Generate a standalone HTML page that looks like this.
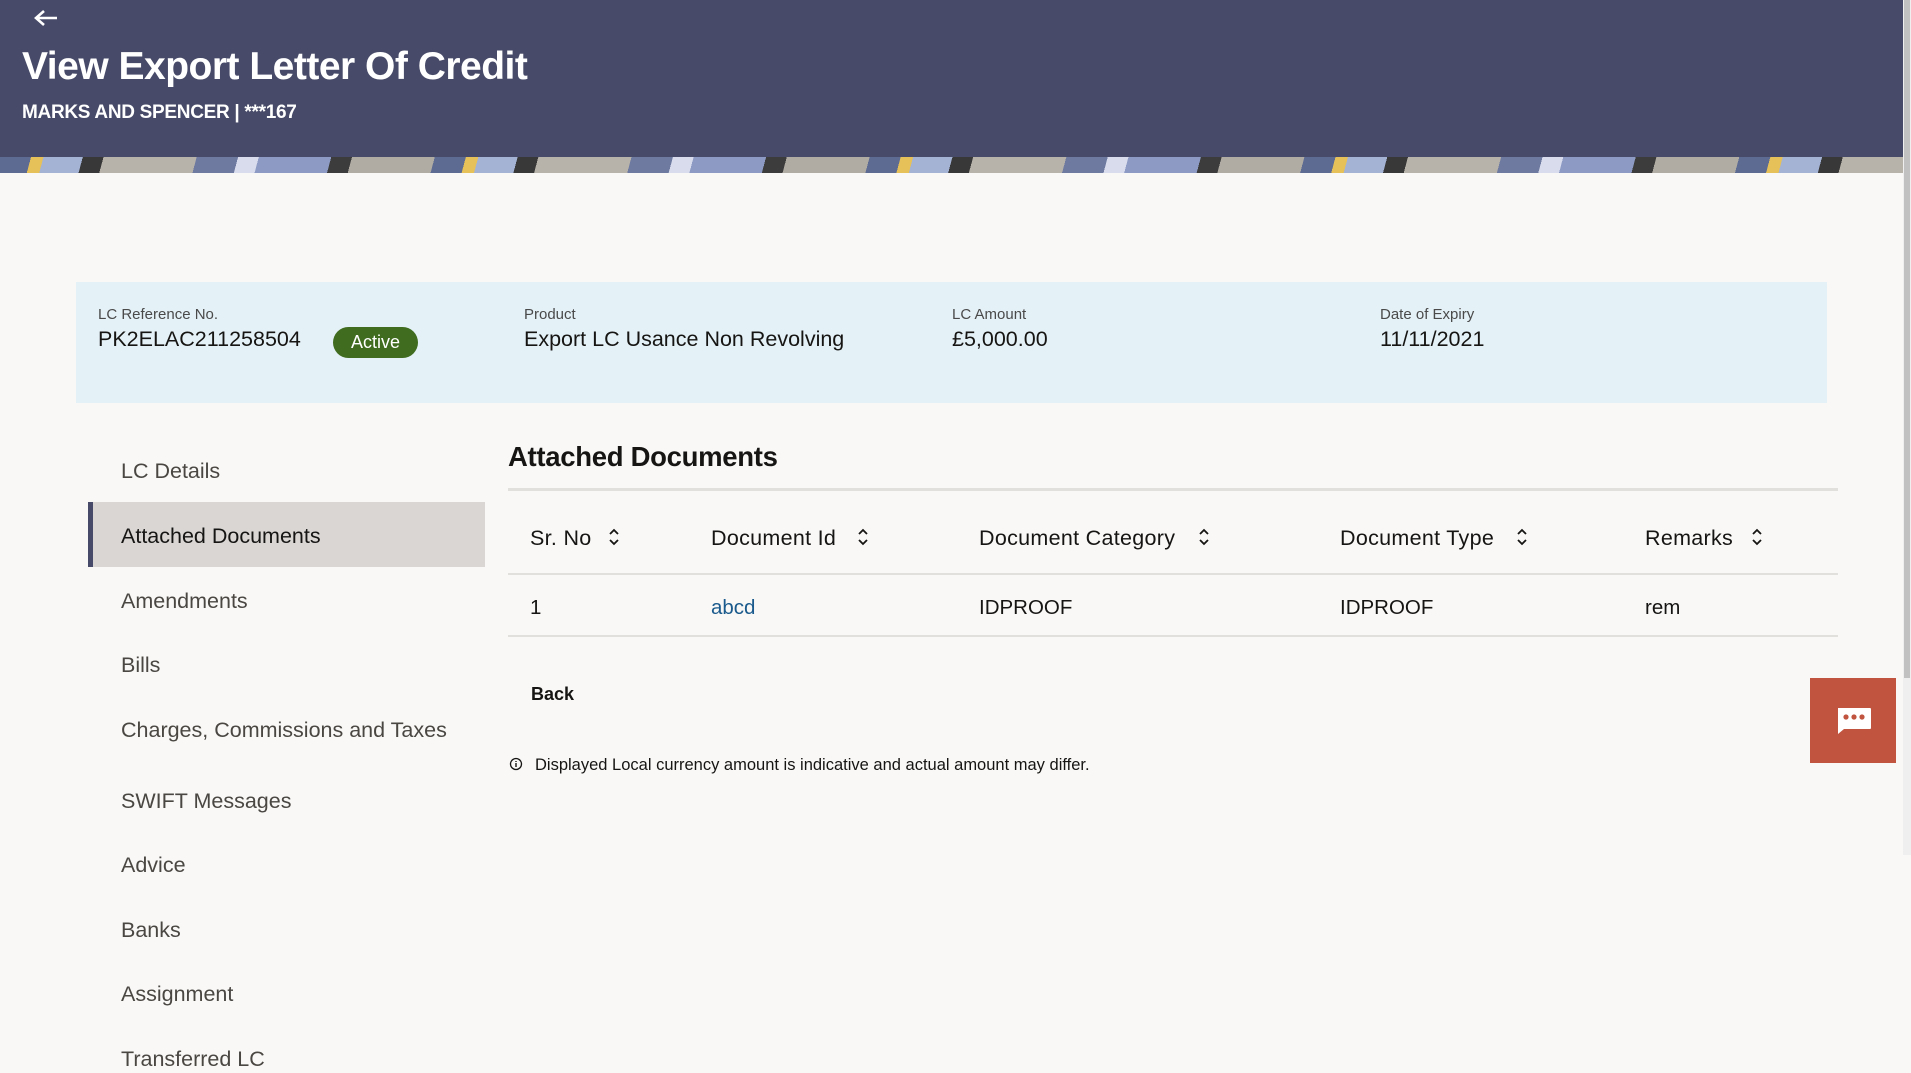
<!DOCTYPE html>
<html><head><meta charset="utf-8">
<style>
*{margin:0;padding:0;box-sizing:border-box}
body{width:1911px;height:1073px;overflow:hidden;background:#f9f8f6;font-family:"Liberation Sans",sans-serif;color:#161513;position:relative}
.a{position:absolute;white-space:nowrap}
.hdr{position:absolute;left:0;top:0;width:1903px;height:157px;background:#474a68}
.band{position:absolute;left:0;top:157px;width:1903px;height:16px;
background:repeating-linear-gradient(105deg,#5d6a92 0 30px,#e6c15a 30px 42px,#a4b2d4 42px 80px,#383838 80px 100px,#b7b2aa 100px 190px,#6e7aa0 190px 230px,#d8dcec 230px 250px,#8d9bc4 250px 320px,#3c3c3c 320px 340px,#b0aca4 340px 420px)}
.sb{position:absolute;left:1903px;top:0;width:8px;height:855px;background:#efefef}
.sbt{position:absolute;left:1904px;top:0;width:6px;height:678px;background:#c1c1c1}
.info{position:absolute;left:76px;top:282px;width:1751px;height:121px;background:#e4f1f7}
.lbl{font-size:15px;color:#4a4a4a}
.val{font-size:21.5px;color:#161513}
.nav{font-size:21.5px;color:#4a4743}
.th{font-size:21.5px;color:#161513;letter-spacing:0.3px}
.td{font-size:20.5px}
.line{position:absolute;height:2px;background:#e2e0dd}
</style></head><body>
<div class="hdr"></div>
<div class="band"></div>
<div class="sb"></div><div class="sbt"></div>
<svg class="a" style="left:33px;top:9px" width="26" height="18" viewBox="0 0 26 18"><path d="M24 9H4M11 2L3 9l8 7" stroke="#fff" stroke-width="2.6" fill="none"/></svg>
<div class="a" style="left:22px;top:45px;font-size:39px;font-weight:bold;color:#fff;letter-spacing:-0.5px">View Export Letter Of Credit</div>
<div class="a" style="left:22px;top:102px;font-size:19px;font-weight:bold;color:#fff;letter-spacing:-0.3px">MARKS AND SPENCER | ***167</div>

<div class="info"></div>
<div class="a lbl" style="left:98px;top:306px">LC Reference No.</div>
<div class="a val" style="left:98px;top:327px">PK2ELAC211258504</div>
<div class="a" style="left:333px;top:327px;width:85px;height:31px;border-radius:16px;background:#3f6c1f;color:#fff;font-size:18px;text-align:center;line-height:31px">Active</div>
<div class="a lbl" style="left:524px;top:306px">Product</div>
<div class="a val" style="left:524px;top:327px">Export LC Usance Non Revolving</div>
<div class="a lbl" style="left:952px;top:306px">LC Amount</div>
<div class="a val" style="left:952px;top:327px">£5,000.00</div>
<div class="a lbl" style="left:1380px;top:306px">Date of Expiry</div>
<div class="a val" style="left:1380px;top:327px">11/11/2021</div>

<div class="a" style="left:88px;top:502px;width:397px;height:65px;background:#d9d6d4;border-left:5px solid #474a68"></div>
<div class="a nav" style="left:121px;top:459px">LC Details</div>
<div class="a nav" style="left:121px;top:524px;color:#161513">Attached Documents</div>
<div class="a nav" style="left:121px;top:589px">Amendments</div>
<div class="a nav" style="left:121px;top:653px">Bills</div>
<div class="a nav" style="left:121px;top:718px">Charges, Commissions and Taxes</div>
<div class="a nav" style="left:121px;top:789px">SWIFT Messages</div>
<div class="a nav" style="left:121px;top:853px">Advice</div>
<div class="a nav" style="left:121px;top:918px">Banks</div>
<div class="a nav" style="left:121px;top:982px">Assignment</div>
<div class="a nav" style="left:121px;top:1047px">Transferred LC</div>

<div class="a" style="left:508px;top:441px;font-size:27.5px;font-weight:bold;letter-spacing:-0.3px">Attached Documents</div>
<div class="line" style="left:508px;top:488px;width:1330px;height:3px"></div>
<div class="a th" style="left:530px;top:526px">Sr. No</div>
<div class="a th" style="left:711px;top:526px">Document Id</div>
<div class="a th" style="left:979px;top:526px">Document Category</div>
<div class="a th" style="left:1340px;top:526px">Document Type</div>
<div class="a th" style="left:1645px;top:526px">Remarks</div>
<svg class="a" style="left:607px;top:527px" width="14" height="20" viewBox="0 0 14 20"><path d="M3 7l4-4 4 4M3 13l4 4 4-4" stroke="#161513" stroke-width="1.8" fill="none"/></svg>
<svg class="a" style="left:856px;top:527px" width="14" height="20" viewBox="0 0 14 20"><path d="M3 7l4-4 4 4M3 13l4 4 4-4" stroke="#161513" stroke-width="1.8" fill="none"/></svg>
<svg class="a" style="left:1197px;top:527px" width="14" height="20" viewBox="0 0 14 20"><path d="M3 7l4-4 4 4M3 13l4 4 4-4" stroke="#161513" stroke-width="1.8" fill="none"/></svg>
<svg class="a" style="left:1515px;top:527px" width="14" height="20" viewBox="0 0 14 20"><path d="M3 7l4-4 4 4M3 13l4 4 4-4" stroke="#161513" stroke-width="1.8" fill="none"/></svg>
<svg class="a" style="left:1750px;top:527px" width="14" height="20" viewBox="0 0 14 20"><path d="M3 7l4-4 4 4M3 13l4 4 4-4" stroke="#161513" stroke-width="1.8" fill="none"/></svg>
<div class="line" style="left:508px;top:573px;width:1330px"></div>
<div class="a td" style="left:530px;top:596px">1</div>
<div class="a td" style="left:711px;top:596px;color:#1a5a8c">abcd</div>
<div class="a td" style="left:979px;top:596px">IDPROOF</div>
<div class="a td" style="left:1340px;top:596px">IDPROOF</div>
<div class="a td" style="left:1645px;top:596px">rem</div>
<div class="line" style="left:508px;top:635px;width:1330px"></div>

<div class="a" style="left:531px;top:684px;font-size:18px;font-weight:bold">Back</div>
<svg class="a" style="left:509px;top:757px" width="14" height="14" viewBox="0 0 14 14"><circle cx="7" cy="7" r="5.5" stroke="#161513" stroke-width="1.3" fill="none"/><path d="M7 6v4M7 4v1" stroke="#161513" stroke-width="1.4"/></svg>
<div class="a" style="left:535px;top:756px;font-size:16.5px">Displayed Local currency amount is indicative and actual amount may differ.</div>

<div class="a" style="left:1810px;top:678px;width:86px;height:85px;background:#c0543f"></div>
<svg class="a" style="left:1836px;top:707px" width="36" height="28" viewBox="0 0 36 28"><path d="M2 1h32a1 1 0 0 1 1 1v19a1 1 0 0 1-1 1H8l-6 5z" fill="#fff"/><circle cx="10" cy="10" r="2.6" fill="#c0543f"/><circle cx="18" cy="10" r="2.6" fill="#c0543f"/><circle cx="26" cy="10" r="2.6" fill="#c0543f"/></svg>
</body></html>
